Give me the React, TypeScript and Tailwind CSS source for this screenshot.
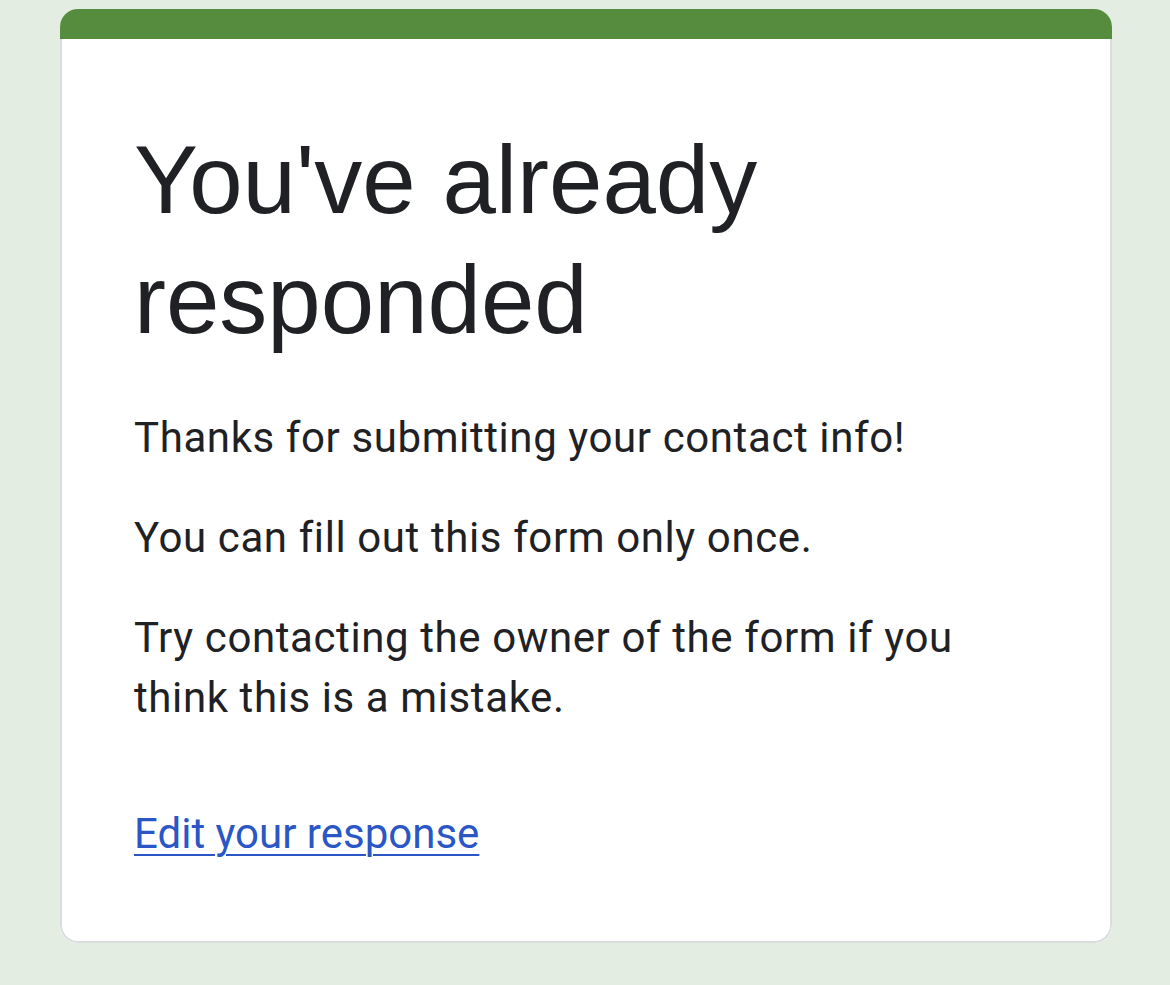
export default function App() {
  return (
    <div className="min-h-[985px] w-full bg-[#e3ede2] pt-[9px]">
      <div className="ml-[60px] w-[1052px] overflow-hidden rounded-[18px] bg-white">
        <div className="h-[30px] bg-[#568c3d]" />
        <div className="rounded-b-[18px] border-2 border-t-0 border-[#dadce0] pl-[72px] pr-[60px] pt-[81px] pb-[77px]">
          <h1 className="font-['Liberation_Sans',Arial,sans-serif] text-[96px] leading-[120px] text-[#202124]">
            You've already responded
          </h1>
          <div className="mt-[48px] flex flex-col gap-[40px] font-['Roboto',sans-serif] text-[42px] leading-[60px] tracking-[0.6px] text-[#202124] pr-[80px]">
            <p>Thanks for submitting your contact info!</p>
            <p>You can fill out this form only once.</p>
            <p>Try contacting the owner of the form if you think this is a mistake.</p>
          </div>
          <a
            href="#"
            className="mt-[76px] block w-fit font-['Roboto',sans-serif] text-[42px] leading-[60px] text-[#2a56c6] underline underline-offset-[6px] decoration-2"
          >
            Edit your response
          </a>
        </div>
      </div>
    </div>
  );
}
